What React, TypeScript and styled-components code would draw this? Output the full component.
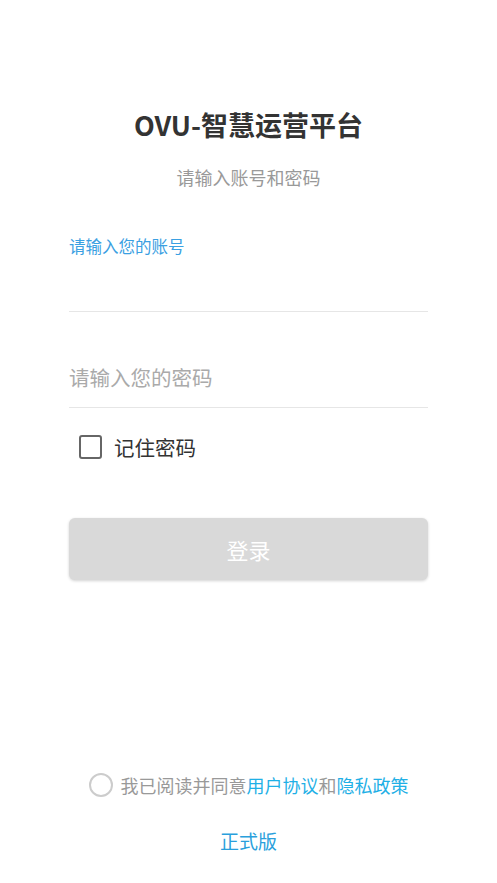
import React from 'react';
import styled, {createGlobalStyle} from 'styled-components';

const GlobalStyle = createGlobalStyle`
  html, body {
    margin: 0;
    padding: 0;
    background: #fff;
    font-family: "Noto Sans CJK SC", "Noto Sans", sans-serif;
  }
  * {
    box-sizing: border-box;
  }
`;

const Page = styled.div`
  min-height: 100vh;
  display: flex;
  flex-direction: column;
  padding: 0 69px;
`;

const Title = styled.h1`
  margin: 106px 0 0;
  font-size: 27px;
  line-height: 38px;
  font-weight: 700;
  color: #333;
  text-align: center;
`;

const Subtitle = styled.div`
  margin-top: 20px;
  font-size: 18px;
  line-height: 26px;
  color: #999;
  text-align: center;
`;

const Field = styled.div<{$top: number}>`
  margin-top: ${p => p.$top}px;
  border-bottom: 1px solid #e6e6e6;
  display: flex;
  flex-direction: column;
`;

const FloatLabel = styled.label`
  font-size: 16.5px;
  line-height: 22px;
  color: #3aa0e2;
`;

const Input = styled.input<{$height: number; $mt: number}>`
  border: none;
  outline: none;
  padding: 0;
  margin-top: ${p => p.$mt}px;
  height: ${p => p.$height}px;
  font-family: inherit;
  font-size: 20.5px;
  color: #333;
  background: transparent;

  &::placeholder {
    color: #aaa;
  }
`;

const RememberRow = styled.label`
  margin-top: 19px;
  height: 40px;
  display: flex;
  align-items: center;
  gap: 12px;
  padding-left: 10px;
  font-size: 20.5px;
  color: #333;
`;

const Box = styled.span`
  width: 23px;
  height: 24px;
  border: 2.5px solid #666;
  border-radius: 3px;
`;

const LoginButton = styled.button`
  margin-top: 51px;
  height: 62px;
  width: 100%;
  border: none;
  border-radius: 6px;
  background: #d9d9d9;
  box-shadow: 0 1px 3px rgba(0, 0, 0, 0.18);
  color: #fff;
  font-family: inherit;
  font-size: 22px;
`;

const Spacer = styled.div`
  flex: 1;
`;

const Agreement = styled.div`
  display: flex;
  align-items: center;
  justify-content: center;
  gap: 8px;
  height: 26px;
  font-size: 18px;
  color: #999;
`;

const Radio = styled.span`
  width: 24px;
  height: 24px;
  border: 2px solid #ccc;
  border-radius: 50%;
`;

const Link = styled.span`
  color: #1fb0e6;
`;

const Version = styled.div`
  margin: 30px 0 29px;
  height: 26px;
  line-height: 26px;
  text-align: center;
  font-size: 19px;
  color: #2a9fdc;
`;

export default function App() {
  return (
    <>
      <GlobalStyle />
      <Page>
        <Title>OVU-智慧运营平台</Title>
        <Subtitle>请输入账号和密码</Subtitle>
        <Field $top={45}>
          <FloatLabel>请输入您的账号</FloatLabel>
          <Input $height={54} $mt={0} />
        </Field>
        <Field $top={0}>
          <Input $height={60} $mt={35} type="password" placeholder="请输入您的密码" />
        </Field>
        <RememberRow>
          <Box />
          记住密码
        </RememberRow>
        <LoginButton>登录</LoginButton>
        <Spacer />
        <Agreement>
          <Radio />
          <span>
            我已阅读并同意<Link>用户协议</Link>和<Link>隐私政策</Link>
          </span>
        </Agreement>
        <Version>正式版</Version>
      </Page>
    </>
  );
}
